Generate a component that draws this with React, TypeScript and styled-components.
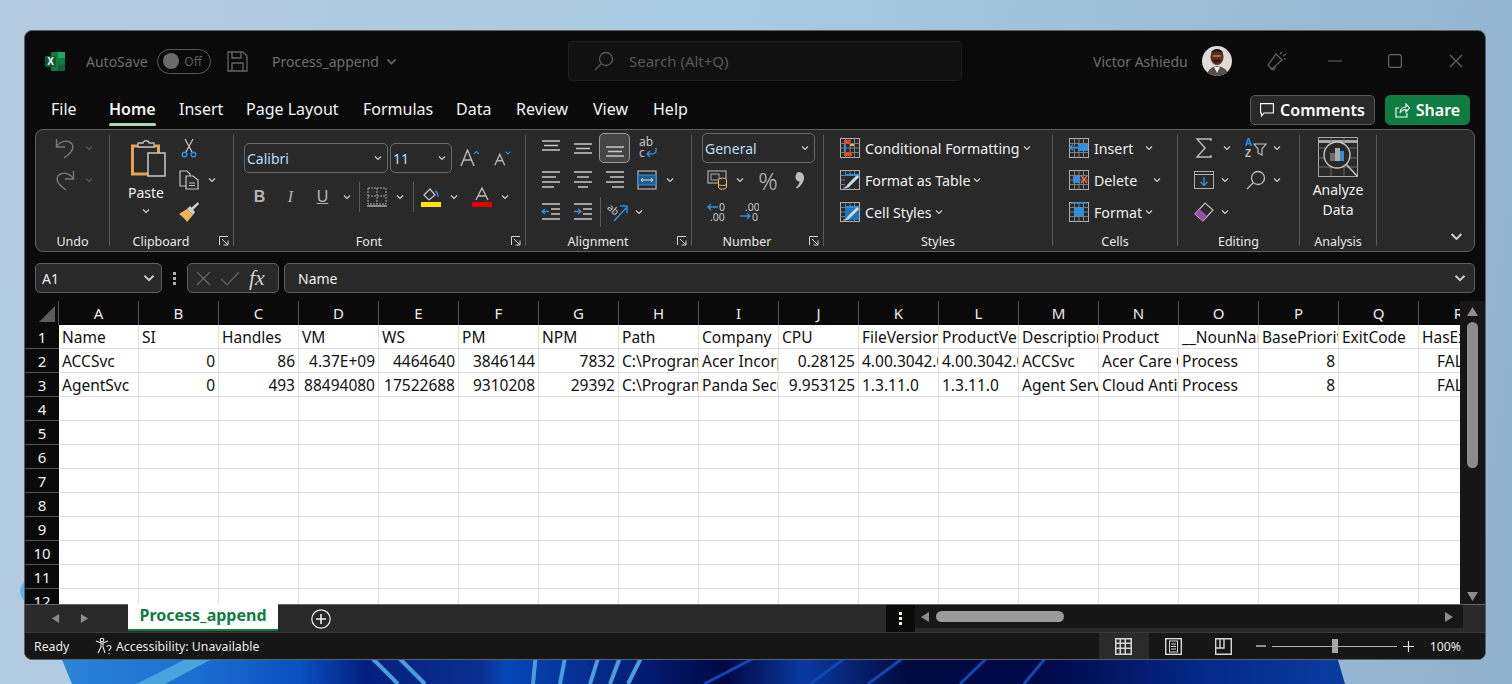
import React from 'react'
import styled, { createGlobalStyle } from 'styled-components'

const Global = createGlobalStyle`
  html, body { margin: 0; padding: 0; width: 1512px; height: 684px; overflow: hidden; }
  body { font-family: "Noto Sans", "Open Sans", sans-serif; color: #f2f2f2; }
  svg { display: block; flex: none; }
`

const Desktop = styled.div`
  position: relative;
  width: 1512px;
  height: 684px;
  box-sizing: border-box;
  padding: 30px 26px 24px 24px;
  background: linear-gradient(100deg, #b4cbe0 0%, #a8cae3 45%, #9dbdd6 75%, #8fb2cf 100%);
  overflow: hidden;
`

const Wallpaper = styled.svg`
  position: absolute;
  left: 0;
  top: 0;
`

const Win = styled.div`
  position: relative;
  height: 100%;
  box-sizing: border-box;
  display: flex;
  flex-direction: column;
  background: #0a0a0a;
  border: 1px solid #5c5f62;
  border-radius: 8px;
  overflow: hidden;
`

const TitleBar = styled.div`
  height: 60px;
  flex: none;
  display: flex;
  align-items: center;
  padding-left: 20px;
  color: #6e6e6e;
  font-size: 14px;
`

const AutoSaveLabel = styled.span`
  margin-left: 20px;
  width: 71px;
`

const Toggle = styled.div`
  width: 54px;
  height: 25px;
  box-sizing: border-box;
  border: 1px solid #5a5a5a;
  border-radius: 13px;
  display: flex;
  align-items: center;
  padding: 0 8px 0 5px;
  justify-content: space-between;
  font-size: 12px;
  color: #5e5e5e;
`

const ToggleKnob = styled.span`
  width: 16px;
  height: 16px;
  border-radius: 50%;
  background: #6a6a6a;
`

const SaveSlot = styled.div`
  margin: 0 24px 0 16px;
`

const DocName = styled.div`
  width: 114px;
  font-size: 14px;
`

const SearchBox = styled.div`
  margin-left: 171px;
  width: 394px;
  height: 40px;
  box-sizing: border-box;
  background: #111111;
  border: 1px solid #1e1e1e;
  border-radius: 4px;
  display: flex;
  align-items: center;
  gap: 15px;
  padding-left: 25px;
  font-size: 15px;
  color: #585858;
`

const UserName = styled.div`
  margin-left: 131px;
  width: 109px;
  font-size: 14px;
  white-space: nowrap;
`

const WinButtons = styled.div`
  display: flex;
  align-items: center;
  margin-left: 35px;
`

const WinSlot = styled.div<{ $w: number }>`
  width: ${p => p.$w}px;
  flex: none;
`

const TabRow = styled.div`
  height: 34px;
  flex: none;
  display: flex;
  align-items: center;
  padding-left: 26px;
`

const Tab = styled.div<{ $w: number; $on?: boolean }>`
  position: relative;
  width: ${p => p.$w}px;
  box-sizing: border-box;
  padding-top: 3px;
  font-size: 16px;
  line-height: 31px;
  font-weight: ${p => (p.$on ? 600 : 400)};
  color: #f4f4f4;
  white-space: nowrap;
  ${p => p.$on && `&::after { content: ""; position: absolute; left: 0; width: 47px; bottom: -1px; height: 3px; background: #a8d8b9; border-radius: 2px; }`}
`

const TabActions = styled.div`
  margin-left: auto;
  margin-right: 15px;
  margin-top: 4px;
  display: flex;
  gap: 10px;
`

const ActionBtn = styled.div<{ $w: number; $green?: boolean }>`
  width: ${p => p.$w}px;
  height: 30px;
  box-sizing: border-box;
  border-radius: 5px;
  display: flex;
  align-items: center;
  justify-content: center;
  gap: 6px;
  font-size: 16px;
  font-weight: 600;
  color: #fff;
  background: ${p => (p.$green ? '#107c41' : '#292929')};
  border: 1px solid ${p => (p.$green ? '#107c41' : '#5a5a5a')};
`

const Ribbon = styled.div`
  margin: 4px 10px 0;
  height: 123px;
  flex: none;
  box-sizing: border-box;
  background: #292929;
  border: 1px solid #5f5f5f;
  border-radius: 8px;
  display: flex;
  padding: 5px 0 5px;
  position: relative;
`

const Group = styled.div<{ $w: number; $end?: boolean }>`
  position: relative;
  width: ${p => p.$w}px;
  flex: none;
  box-sizing: border-box;
  display: flex;
  flex-direction: column;
  border-right: ${p => (p.$end ? 'none' : '1px solid #5a5a5a')};
`

const GroupBody = styled.div<{ $pt?: number; $pl?: number; $row?: boolean }>`
  flex: 1;
  margin-top: -3px;
  padding: ${p => p.$pt ?? 0}px 0 0 ${p => p.$pl ?? 0}px;
  display: flex;
  flex-direction: ${p => (p.$row ? 'row' : 'column')};
  min-height: 0;
`

const Caption = styled.div<{ $launch?: boolean }>`
  height: 16px;
  margin-bottom: -4px;
  flex: none;
  line-height: 16px;
  text-align: center;
  font-size: 12.5px;
  color: #e8e8e8;
  padding-right: ${p => (p.$launch ? 21 : 0)}px;
`

const Launcher = styled.div`
  position: absolute;
  right: 4px;
  bottom: 0;
`

const Row = styled.div<{ $h?: number }>`
  height: ${p => p.$h ?? 32}px;
  display: flex;
  align-items: center;
  flex: none;
`

const Stack = styled.div<{ $ml?: number }>`
  margin-left: ${p => p.$ml ?? 0}px;
  display: flex;
  flex-direction: column;
  flex: none;
`

const Slot = styled.div<{ $w: number; $h?: number; $ml?: number; $sel?: boolean }>`
  width: ${p => p.$w}px;
  height: ${p => p.$h ?? 30}px;
  margin-left: ${p => p.$ml ?? 0}px;
  box-sizing: border-box;
  display: flex;
  align-items: center;
  justify-content: center;
  flex: none;
  ${p => p.$sel && 'background: #454545; border: 1px solid #9a9a9a; border-radius: 5px;'}
`

const VSep = styled.div`
  width: 1px;
  height: 30px;
  background: #5a5a5a;
  flex: none;
`

const Select = styled.div<{ $w: number; $ml?: number }>`
  width: ${p => p.$w}px;
  margin-left: ${p => p.$ml ?? 0}px;
  height: 30px;
  box-sizing: border-box;
  border: 1px solid #6a6a6a;
  border-radius: 5px;
  display: flex;
  align-items: center;
  justify-content: space-between;
  padding: 0 5px 0 2px;
  font-size: 14px;
  color: #b8ddf6;
  flex: none;
`

const StyleLabel = styled.span<{ $w?: number }>`
  font-size: 14.2px;
  color: #f0f0f0;
  white-space: nowrap;
  margin-left: 5px;
  ${p => p.$w && `width: ${p.$w}px;`}
`

const ColumnCenter = styled.div<{ $w: number; $ml?: number; $mt?: number }>`
  width: ${p => p.$w}px;
  margin-left: ${p => p.$ml ?? 0}px;
  margin-top: ${p => p.$mt ?? 0}px;
  display: flex;
  flex-direction: column;
  align-items: center;
  flex: none;
`

const BigLabel = styled.div<{ $mt?: number; $shift?: number }>`
  font-size: 14px;
  line-height: 20px;
  margin-top: ${p => p.$mt ?? 0}px;
  margin-left: ${p => p.$shift ?? 0}px;
  color: #f0f0f0;
`

const Collapse = styled.div`
  position: absolute;
  right: 11px;
  bottom: 8px;
`

const FormulaRow = styled.div`
  margin: 11px 10px 0;
  height: 30px;
  flex: none;
  display: flex;
  align-items: stretch;
`

const FormulaBox = styled.div<{ $w?: number; $grow?: boolean }>`
  box-sizing: border-box;
  background: #292929;
  border: 1px solid #5f5f5f;
  border-radius: 5px;
  display: flex;
  align-items: center;
  font-size: 14px;
  ${p => p.$w && `width: ${p.$w}px; flex: none;`}
  ${p => p.$grow && 'flex: 1;'}
`

const NameBox = styled(FormulaBox)`
  justify-content: space-between;
  padding: 0 6px;
  color: #eee;
`

const Grip = styled.div`
  width: 25px;
  flex: none;
  display: flex;
  align-items: center;
  justify-content: center;
`

const FxBox = styled(FormulaBox)`
  margin-right: 5px;
  padding-left: 8px;
  gap: 9px;
  color: #bdbdbd;
`

const FxLabel = styled.span`
  font-family: "Liberation Serif", serif;
  font-style: italic;
  font-size: 22px;
  color: #d0d0d0;
`

const InputBox = styled(FormulaBox)`
  padding: 0 8px 0 13px;
  justify-content: space-between;
  color: #eee;
`

const Middle = styled.div`
  margin-top: 8px;
  flex: 1;
  min-height: 0;
  display: flex;
`

const Sheet = styled.div`
  flex: 1;
  min-width: 0;
  overflow: hidden;
  display: grid;
  grid-template-columns: 34px repeat(18, 80px);
  grid-auto-rows: 24px;
  font-size: 15.5px;
`

const Corner = styled.div`
  background: #0a0a0a;
  display: flex;
  justify-content: flex-end;
  align-items: flex-end;
  padding: 0 3px 3px 0;
  border-right: 1px solid #555;
  box-sizing: border-box;
`

const ColHead = styled.div`
  background: #0a0a0a;
  color: #ececec;
  text-align: center;
  line-height: 24px;
  border-right: 1px solid #555;
  font-size: 15px;
  box-sizing: border-box;
`

const RowHead = styled.div`
  background: #0a0a0a;
  color: #f2f2f2;
  text-align: center;
  line-height: 24px;
  border-bottom: 1px solid #555;
  font-size: 15px;
  box-sizing: border-box;
`

const Cell = styled.div<{ $a?: 'right' | 'center' }>`
  background: #fff;
  color: #111;
  box-sizing: border-box;
  border-right: 1px solid #e0e0e0;
  border-bottom: 1px solid #e0e0e0;
  line-height: 24px;
  padding: 0 3px;
  overflow: hidden;
  white-space: nowrap;
  text-align: ${p => p.$a ?? 'left'};
`

const VScroll = styled.div`
  width: 25px;
  flex: none;
  background: #161616;
  display: flex;
  flex-direction: column;
  align-items: center;
  padding: 5px 0 2px;
  box-sizing: border-box;
  justify-content: space-between;
`

const VThumb = styled.div`
  width: 11px;
  height: 146px;
  border-radius: 6px;
  background: #8c8c8c;
  margin-top: 5px;
  margin-bottom: auto;
`

const SheetBar = styled.div`
  height: 29px;
  flex: none;
  box-sizing: border-box;
  background: #292929;
  border-top: 1px solid #666;
  border-bottom: 1px solid #3a3a3a;
  display: flex;
  align-items: stretch;
`

const NavArrows = styled.div`
  width: 103px;
  flex: none;
  display: flex;
  align-items: center;
  padding-left: 26px;
  gap: 20px;
  box-sizing: border-box;
`

const SheetTab = styled.div`
  width: 150px;
  flex: none;
  margin-top: -1px;
  height: 27px;
  box-sizing: border-box;
  background: #fff;
  border-bottom: 2px solid #107c41;
  color: #107c41;
  font-weight: 700;
  font-size: 16px;
  text-align: center;
  line-height: 23px;
`

const AddSlot = styled.div`
  margin-left: 33px;
  width: 20px;
  display: flex;
  align-items: center;
`

const Dots = styled.div`
  margin-left: auto;
  width: 29px;
  flex: none;
  background: #0a0a0a;
  display: flex;
  align-items: center;
  justify-content: center;
`

const HScroll = styled.div`
  width: 548px;
  flex: none;
  background: #161616;
  display: flex;
  align-items: center;
  padding: 0 9px 0 5px;
  box-sizing: border-box;
  margin-bottom: 4px;
  margin-right: 22px;
`

const HThumb = styled.div`
  width: 128px;
  height: 11px;
  border-radius: 6px;
  background: #9a9a9a;
  margin: 0 auto 0 6px;
`

const StatusBar = styled.div`
  height: 26px;
  flex: none;
  background: #161616;
  display: flex;
  align-items: center;
  padding-left: 9px;
  font-size: 12.3px;
  color: #eaeaea;
`

const ReadyText = styled.span`
  width: 61px;
`

const A11y = styled.div`
  display: flex;
  align-items: center;
  gap: 3px;
`

const ViewBtn = styled.div<{ $on?: boolean }>`
  width: 50px;
  height: 26px;
  display: flex;
  align-items: center;
  justify-content: center;
  background: ${p => (p.$on ? '#2b2b2b' : 'transparent')};
`

const ViewGroup = styled.div`
  margin-left: auto;
  display: flex;
`

const ZoomWrap = styled.div`
  display: flex;
  align-items: center;
  margin-left: 7px;
  margin-right: 24px;
`

const Slider = styled.div`
  position: relative;
  width: 125px;
  height: 1px;
  background: #b0b0b0;
  margin: 0 6px;
`

const SliderThumb = styled.div`
  position: absolute;
  left: 60px;
  top: -7px;
  width: 6px;
  height: 14px;
  background: #a8a8a8;
`

const ZoomText = styled.span`
  margin-left: 16px;
  font-size: 12.3px;
`

const G = '#b5b5b5'
const B = '#2e8fdc'

const Chev = ({ s = 8, c = '#d0d0d0' }: { s?: number; c?: string }) => (
  <svg width={s} height={s} viewBox="0 0 8 8" fill="none" stroke={c} strokeWidth="1.2"><path d="M1 2.5 4 5.5 7 2.5" /></svg>
)

const Tri = ({ dir, c = '#8c8c8c', s = 10 }: { dir: 'u' | 'd' | 'l' | 'r'; c?: string; s?: number }) => {
  const d = { u: 'M5 1 10 9H0Z', d: 'M0 1H10L5 9Z', l: 'M9 0V10L1 5Z', r: 'M1 0V10L9 5Z' }[dir]
  return <svg width={s} height={s} viewBox="0 0 10 10" fill={c}><path d={d} /></svg>
}

const ExcelLogo = () => (
  <svg width="21" height="21" viewBox="0 0 21 21">
    <rect x="6" y="1" width="14" height="19" rx="1" fill="#107c41" />
    <rect x="13" y="1" width="7" height="6" fill="#21a366" />
    <rect x="13" y="7" width="7" height="6.5" fill="#107c41" />
    <rect x="13" y="13.5" width="7" height="6.5" fill="#185c37" />
    <rect x="0" y="5" width="11" height="11" rx="1" fill="#0b5c30" />
    <text x="5.5" y="14" textAnchor="middle" fontSize="10" fontWeight="700" fontFamily="Liberation Sans" fill="#fff">X</text>
  </svg>
)

const SaveIcon = () => (
  <svg width="21" height="21" viewBox="0 0 21 21" fill="none" stroke="#666" strokeWidth="1.3">
    <path d="M1 1H16L20 5V20H1Z" /><path d="M5 1V7H14V1M5 20V12H16V20" />
  </svg>
)

const Avatar = () => (
  <svg width="30" height="30" viewBox="0 0 30 30">
    <clipPath id="av"><circle cx="15" cy="15" r="15" /></clipPath>
    <g clipPath="url(#av)">
      <rect width="30" height="30" fill="#dedbd6" />
      <path d="M5 30C6 22 11 21 15 20C20 21 25 22 27 30Z" fill="#55504e" />
      <path d="M12 21 15 27 18 21Z" fill="#efefef" />
      <ellipse cx="15" cy="11" rx="6.5" ry="8" fill="#5a2d1c" />
      <path d="M9 7C10 2 20 2 21 7 18 5 12 5 9 7Z" fill="#1b0f0b" />
      <rect x="11" y="9" width="8" height="2" fill="#9a6a4a" />
      <rect x="12" y="14" width="6" height="2" fill="#2b130c" />
    </g>
  </svg>
)

const Megaphone = () => (
  <svg width="20" height="20" viewBox="0 0 20 20" fill="none" stroke="#666" strokeWidth="1.2">
    <path d="M1 14 9 3 15 9 5 18Z" /><path d="M4 17C5 20 8 19 8 16" /><path d="M13 3 15 1M16 5 19 3M17 8H19" />
  </svg>
)

const Undo = () => (
  <svg width="20" height="21" viewBox="0 0 20 21" fill="none" stroke="#7a7a7a" strokeWidth="1.4">
    <path d="M1.5 1V9H10" /><path d="M1.5 9C5 3 13 1 17 6C20 11 15 16 9 20" />
  </svg>
)

const Redo = () => (
  <svg width="20" height="21" viewBox="0 0 20 21" fill="none" stroke="#7a7a7a" strokeWidth="1.4">
    <path d="M18.5 1V9H10" /><path d="M18.5 9C15 3 7 1 3 6C0 11 5 16 11 20" />
  </svg>
)

const PasteIcon = () => (
  <svg width="36" height="38" viewBox="0 0 36 38">
    <rect x="1.5" y="6" width="26" height="28" fill="none" stroke="#e8a24f" strokeWidth="3" />
    <path d="M7 7V3H12C12 0 18 0 18 3H23V7Z" fill="#292929" stroke="#bdbdbd" strokeWidth="1.3" />
    <rect x="17" y="13" width="17" height="23" fill="#292929" stroke="#c8c8c8" strokeWidth="1.5" />
  </svg>
)

const Scissors = () => (
  <svg width="16" height="20" viewBox="0 0 16 20" fill="none">
    <path d="M5 14 12 1M11 14 4 1" stroke="#c8c8c8" strokeWidth="1.2" />
    <circle cx="3.5" cy="16.5" r="2.3" stroke={B} strokeWidth="1.4" />
    <circle cx="12.5" cy="16.5" r="2.3" stroke={B} strokeWidth="1.4" />
  </svg>
)

const CopyIcon = () => (
  <svg width="20" height="20" viewBox="0 0 20 20" fill="none" stroke="#c4c4c4" strokeWidth="1.2">
    <path d="M1 1H8L11 4V16H1Z" /><path d="M7 6H14L19 10V19H7Z" fill="#292929" /><path d="M10 13H16M10 15.5H16" />
  </svg>
)

const BrushIcon = () => (
  <svg width="20" height="20" viewBox="0 0 20 20">
    <path d="M12 6 19 0 20 2 14 8Z" fill="#d0d0d0" />
    <path d="M0 12 8 7 14 13 8 20C6 17 3 14 0 12Z" fill="#f2b35c" />
    <path d="M8 7 11 4 16 10 14 13Z" fill="#cfcfcf" />
  </svg>
)

const Launch = () => (
  <svg width="10" height="10" viewBox="0 0 10 10" fill="none" stroke="#d4d4d4" strokeWidth="1">
    <path d="M.5 9V.5H9M3 3 9 9M9 4.5V9H4.5" />
  </svg>
)

const GrowA = ({ up }: { up?: boolean }) => (
  <svg width={up ? 20 : 18} height="18" viewBox="0 0 20 18" fill="none" stroke={G} strokeWidth="1.5">
    <path d={up ? 'M1 17 7.5 1 14 17M3.5 11H11.5' : 'M2 17 7.5 5 13 17M4 12H11'} />
    <path d={up ? 'M14 5 16.5 2.5 19 5' : 'M14 2 16.5 4.5 19 2'} stroke={B} strokeWidth="1.2" />
  </svg>
)

const Letter = styled.span<{ $b?: boolean; $i?: boolean; $u?: boolean }>`
  font-family: ${p => (p.$i ? '"Liberation Serif", serif' : '"Liberation Sans", sans-serif')};
  font-size: 16px;
  color: #b5b5b5;
  font-weight: ${p => (p.$b ? 700 : 400)};
  font-style: ${p => (p.$i ? 'italic' : 'normal')};
  text-decoration: ${p => (p.$u ? 'underline' : 'none')};
`

const Borders = () => (
  <svg width="20" height="20" viewBox="0 0 20 20" fill="none" stroke="#a8a8a8" strokeWidth="1" strokeDasharray="2 1">
    <path d="M1 1H19V17H1ZM10 1V17M1 9H19" /><path d="M0 19H20" strokeDasharray="none" strokeWidth="1.5" />
  </svg>
)

const FillIcon = () => (
  <svg width="20" height="20" viewBox="0 0 20 20" fill="none">
    <path d="M3 8 9 2 14 8 8 13Z" stroke="#c8c8c8" strokeWidth="1.2" />
    <path d="M14 4C16 5 17 8 17 10" stroke={B} strokeWidth="1.5" />
    <rect y="15" width="20" height="5" fill="#ffe600" />
  </svg>
)

const FontColor = () => (
  <svg width="20" height="20" viewBox="0 0 20 20" fill="none">
    <path d="M4 13 10 1 16 13M6 9H14" stroke="#c0c0c0" strokeWidth="1.3" />
    <rect y="15" width="20" height="5" fill="#e60000" />
  </svg>
)

const lines = (ys: [number, number, number][], c = '#c8c8c8') =>
  ys.map(([y, a, b], i) => <path key={i} d={`M${a} ${y}H${b}`} stroke={c} strokeWidth="1.4" />)

const Lines = ({ spec }: { spec: [number, number, number][] }) => (
  <svg width="20" height="20" viewBox="0 0 20 20" fill="none">{lines(spec)}</svg>
)

const AL_TOP: [number, number, number][] = [[3, 1, 19], [7.5, 3, 17], [12, 1, 19]]
const AL_MID: [number, number, number][] = [[6, 1, 19], [10.5, 3, 17], [15, 1, 19]]
const AL_BOT: [number, number, number][] = [[9, 1, 19], [13.5, 3, 17], [18, 1, 19]]
const AL_L: [number, number, number][] = [[2, 1, 19], [7, 1, 15], [12, 1, 19], [17, 1, 13]]
const AL_C: [number, number, number][] = [[2, 1, 19], [7, 4, 16], [12, 1, 19], [17, 5, 15]]
const AL_R: [number, number, number][] = [[2, 1, 19], [7, 5, 19], [12, 1, 19], [17, 7, 19]]

const WrapIcon = () => (
  <svg width="20" height="24" viewBox="0 0 20 24" fill="none">
    <text x="1" y="10" fontSize="12" fontFamily="Noto Sans" fill="#c8c8c8">ab</text>
    <text x="1" y="21" fontSize="12" fontFamily="Noto Sans" fill="#c8c8c8">c</text>
    <path d="M18 12V15C18 18 15 18 9 18M12 15 9 18 12 21" stroke={B} strokeWidth="1.4" />
  </svg>
)

const MergeIcon = () => (
  <svg width="20" height="20" viewBox="0 0 20 20" fill="none">
    <rect x="1" y="1" width="18" height="18" stroke="#b5b5b5" strokeWidth="1.2" />
    <rect x="1" y="5" width="18" height="10" fill="#1f5d8d" stroke={B} />
    <path d="M4 10H16M6 8 4 10 6 12M14 8 16 10 14 12" stroke="#cfe6f7" strokeWidth="1" />
  </svg>
)

const Indent = ({ dir }: { dir: 'l' | 'r' }) => (
  <svg width="20" height="20" viewBox="0 0 20 20" fill="none">
    {lines([[2, 1, 19], [7, 10, 19], [12, 10, 19], [17, 1, 19]])}
    <path d={dir === 'l' ? 'M8 9.5H1M4 7 1 9.5 4 12' : 'M1 9.5H8M5 7 8 9.5 5 12'} stroke={B} strokeWidth="1.4" />
  </svg>
)

const Orient = () => (
  <svg width="22" height="20" viewBox="0 0 22 20" fill="none">
    <text x="0" y="11" fontSize="10" fontFamily="Noto Sans" fill="#c8c8c8" transform="rotate(40 6 8)">ab</text>
    <path d="M7 19 20 5M13 4H20V11" stroke={B} strokeWidth="1.4" />
  </svg>
)

const Accounting = () => (
  <svg width="21" height="20" viewBox="0 0 21 20" fill="none">
    <rect x="1" y="1" width="18" height="12" stroke="#aaa" strokeWidth="1.2" />
    <rect x="4" y="4" width="8" height="6" stroke="#aaa" />
    <ellipse cx="15.5" cy="10" rx="4" ry="2" fill="#292929" stroke="#f0b860" />
    <path d="M11.5 10V17C11.5 20 19.5 20 19.5 17V10M11.5 14C11.5 16 19.5 16 19.5 14" stroke="#f0b860" fill="#292929" />
  </svg>
)

const Percent = styled.span`
  font-size: 24px;
  color: #bcbcbc;
  font-weight: 300;
`

const CommaIcon = () => (
  <svg width="10" height="18" viewBox="0 0 10 18" fill="#bcbcbc">
    <path d="M4 1C8 1 9.5 5 9 8 8 12 5.500 15.500 2 17.500L1 16.500C3 14.500 4.500 12.500 4.500 10.500 2 10.500 .5 8.500 .5 6 .5 3 2 1 4 1Z" />
  </svg>
)

const Decimal = ({ inc }: { inc?: boolean }) => (
  <svg width="20" height="20" viewBox="0 0 20 20" fill="none">
    <text x={inc ? 6 : 12} y="9" fontSize="10.5" fontFamily="Noto Sans" fill="#c8c8c8">{inc ? '.00' : '0'}</text>
    <text x={inc ? 13 : 3} y="19" fontSize="10.5" fontFamily="Noto Sans" fill="#c8c8c8">{inc ? '0' : '.00'}</text>
    <path d={inc ? 'M1 14H11M8 11 11 14 8 17' : 'M11 5H1M4 2 1 5 4 8'} stroke={B} strokeWidth="1.4" />
  </svg>
)

const TableIcon = ({ kind }: { kind: 'cf' | 'ft' | 'cs' | 'ins' | 'del' | 'fmt' }) => (
  <svg width="20" height="20" viewBox="0 0 20 20" fill="none">
    <rect x=".5" y=".5" width="19" height="19" stroke="#b0b0b0" />
    <path d="M.5 5.5H19.5M.5 10H19.5M.5 14.5H19.5M5.5 .5V19.5M10 .5V19.5M14.5 .5V19.5" stroke="#7d7d7d" />
    {kind === 'cf' && <><rect x="4" y="2" width="6" height="4" fill="#e04b1a" /><rect x="4" y="14" width="8" height="4" fill="#e04b1a" /><path d="M5 6V14" stroke={B} strokeWidth="2" /><rect x="10" y="6" width="4" height="2" fill="#f2b35c" /></>}
    {(kind === 'ft' || kind === 'cs') && <><rect x="5" y="5" width="14" height="13" fill={kind === 'cs' ? '#1a76c4' : '#292929'} /><path d="M5 5H19" stroke={B} strokeWidth="2" /><path d="M3 18C6 18 7 15 8 14L17 5 19 7 10 16C9 17 7 19 3 18Z" fill="#d7d7d7" stroke="#6aaee0" strokeWidth=".6" /></>}
    {kind === 'ins' && <><rect x="9" y="6" width="10" height="7" fill={B} /><path d="M9 9.5H1M4 6.5 1 9.5 4 12.5" stroke={B} strokeWidth="1.4" /></>}
    {kind === 'del' && <><rect x="4" y="6" width="7" height="7" fill={B} /><path d="M12 6 18 13M18 6 12 13" stroke="#e2693a" strokeWidth="1.5" /></>}
    {kind === 'fmt' && <><rect x="5" y="5" width="10" height="9" fill={B} /><path d="M2 1H18" stroke={B} strokeWidth="1.6" /></>}
  </svg>
)

const Sigma = () => (
  <svg width="18" height="20" viewBox="0 0 18 20" fill="none" stroke="#bdbdbd" strokeWidth="1.4"><path d="M16 3V1H2L10 10 2 19H16V17" /></svg>
)

const SortIcon = () => (
  <svg width="22" height="22" viewBox="0 0 22 22" fill="none">
    <text x="0" y="9" fontSize="10" fontWeight="700" fontFamily="Liberation Sans" fill={B}>A</text>
    <text x="0" y="20" fontSize="10" fontWeight="700" fontFamily="Liberation Sans" fill="#c0c0c0">Z</text>
    <path d="M9 7H21L17 12V18L13 16V12Z" stroke="#c0c0c0" strokeWidth="1.2" />
  </svg>
)

const FillDown = () => (
  <svg width="20" height="18" viewBox="0 0 20 18" fill="none">
    <rect x=".5" y=".5" width="19" height="17" stroke="#b0b0b0" />
    <path d="M.5 3.5H19.5" stroke="#b0b0b0" />
    <path d="M10 6V14M6.5 11 10 14.5 13.5 11" stroke={B} strokeWidth="1.4" />
  </svg>
)

const FindIcon = ({ c = '#bdbdbd' }: { c?: string }) => (
  <svg width="20" height="20" viewBox="0 0 20 20" fill="none" stroke={c} strokeWidth="1.3">
    <circle cx="12" cy="8" r="6.5" /><path d="M7 13 1 19" />
  </svg>
)

const Eraser = () => (
  <svg width="20" height="20" viewBox="0 0 20 20" fill="none">
    <path d="M1 12 11 1 19 8 9 19Z" stroke="#c0c0c0" strokeWidth="1.2" />
    <path d="M1 12 5.5 7 13 14 9 19Z" fill="#a347b5" />
  </svg>
)

const AnalyzeIcon = () => (
  <svg width="40" height="40" viewBox="0 0 40 40" fill="none">
    <rect x=".5" y=".5" width="39" height="39" stroke="#a8a8a8" />
    <path d="M.5 4.5H39.5" stroke="#a8a8a8" strokeWidth="3" />
    <path d="M.5 11H39.5M.5 21H39.5M.5 30H39.5M13 1V39M26 1V39" stroke="#6b6b6b" />
    <circle cx="19" cy="18" r="13" fill="#292929" stroke="#c4c4c4" strokeWidth="1.4" />
    <rect x="12" y="16" width="5" height="8" fill="#6b6b6b" />
    <rect x="17" y="11" width="5" height="13" fill="#a8a8a8" />
    <rect x="22" y="14" width="4" height="10" fill={B} />
    <path d="M28 27 39 39" stroke="#c4c4c4" strokeWidth="1.6" />
  </svg>
)

const HEAD = 'ABCDEFGHIJKLMNOPQR'.split('')
type C = string | { t: string; a: 'right' | 'center' }
const R = (t: string | number): C => ({ t: String(t), a: 'right' })
const M = (t: string): C => ({ t, a: 'center' })
const ROWS: C[][] = [
  ['Name', 'SI', 'Handles', 'VM', 'WS', 'PM', 'NPM', 'Path', 'Company', 'CPU', 'FileVersion', 'ProductVersion', 'Description', 'Product', '__NounName', 'BasePriority', 'ExitCode', 'HasExited'],
  ['ACCSvc', R(0), R(86), R('4.37E+09'), R(4464640), R(3846144), R(7832), 'C:\\Program Files', 'Acer Incorporated', R(0.28125), '4.00.3042.0', '4.00.3042.0', 'ACCSvc', 'Acer Care Center', 'Process', R(8), '', M('FALSE')],
  ['AgentSvc', R(0), R(493), R(88494080), R(17522688), R(9310208), R(29392), 'C:\\Program Files', 'Panda Security', R(9.953125), '1.3.11.0', '1.3.11.0', 'Agent Service', 'Cloud Antivirus', 'Process', R(8), '', M('FALSE')],
]

const cellOf = (c: C, k: string) =>
  typeof c === 'string' ? <Cell key={k}>{c}</Cell> : <Cell key={k} $a={c.a}>{c.t}</Cell>

export default function App() {
  return (
    <Desktop>
      <Global />
      <Wallpaper width="1512" height="684" viewBox="0 0 1512 684">
        <defs>
          <linearGradient id="bloom" gradientUnits="userSpaceOnUse" x1="55" x2="1345" y1="0" y2="0">
            <stop offset="0" stopColor="#2a86d8" />
            <stop offset=".11" stopColor="#1c6ed0" />
            <stop offset=".19" stopColor="#0a50c0" />
            <stop offset=".24" stopColor="#03207f" />
            <stop offset=".33" stopColor="#0a2f90" />
            <stop offset=".35" stopColor="#0648b8" />
            <stop offset=".46" stopColor="#031a70" />
            <stop offset=".52" stopColor="#010845" />
            <stop offset=".58" stopColor="#0a3aa0" />
            <stop offset=".66" stopColor="#010a40" />
            <stop offset=".77" stopColor="#010a4a" />
            <stop offset=".89" stopColor="#04298a" />
            <stop offset="1" stopColor="#0a3da0" />
          </linearGradient>
        </defs>
        <path d="M58 650H1335L1345 684H72Z" fill="url(#bloom)" />
        <path d="M20 592C20 586 24 580 30 578V604C24 602 21 598 20 592Z" fill="#5fb4e6" />
        <path d="M136 684 200 652H225L165 684Z" fill="#4aa3dc" />
        <path d="M366 652 398 684M393 652 425 684M536 652 533 684M566 652 560 684M600 652 590 684M622 652 610 684M644 652 628 684" stroke="#4a9edc" strokeWidth="4" fill="none" />
        <path d="M760 655 704 684M849 655 810 684M907 655 868 684M990 655 960 684M1048 655 1024 684" stroke="#0f49b5" strokeWidth="3" fill="none" />
      </Wallpaper>
      <Win>
        <TitleBar>
          <ExcelLogo />
          <AutoSaveLabel>AutoSave</AutoSaveLabel>
          <Toggle><ToggleKnob />Off</Toggle>
          <SaveSlot><SaveIcon /></SaveSlot>
          <DocName>Process_append</DocName>
          <Chev s={11} c="#6a6a6a" />
          <SearchBox>
            <FindIcon c="#5a5a5a" />
            Search (Alt+Q)
          </SearchBox>
          <UserName>Victor Ashiedu</UserName>
          <Avatar />
          <WinButtons>
            <WinSlot $w={61}><Megaphone /></WinSlot>
            <WinSlot $w={60}><svg width="14" height="14" viewBox="0 0 14 14" stroke="#666" strokeWidth="1.2"><path d="M0 7H14" /></svg></WinSlot>
            <WinSlot $w={61}><svg width="14" height="14" viewBox="0 0 14 14" fill="none" stroke="#666" strokeWidth="1.2"><rect x=".6" y=".6" width="12.8" height="12.8" rx="2" /></svg></WinSlot>
            <WinSlot $w={14}><svg width="14" height="14" viewBox="0 0 14 14" stroke="#666" strokeWidth="1.2"><path d="M1 1 13 13M13 1 1 13" /></svg></WinSlot>
          </WinButtons>
        </TitleBar>
        <TabRow>
          <Tab $w={58}>File</Tab>
          <Tab $w={70} $on>Home</Tab>
          <Tab $w={67}>Insert</Tab>
          <Tab $w={117}>Page Layout</Tab>
          <Tab $w={93}>Formulas</Tab>
          <Tab $w={60}>Data</Tab>
          <Tab $w={77}>Review</Tab>
          <Tab $w={60}>View</Tab>
          <Tab $w={40}>Help</Tab>
          <TabActions>
            <ActionBtn $w={125}>
              <svg width="14" height="14" viewBox="0 0 14 14" fill="none" stroke="#fff" strokeWidth="1.1"><path d="M.6.6H13.4V10H4L1.5 13V10H.6Z" /></svg>
              Comments
            </ActionBtn>
            <ActionBtn $w={85} $green>
              <svg width="15" height="15" viewBox="0 0 15 15" fill="none" stroke="#fff" strokeWidth="1.1"><path d="M4 5H1V14H12V10M5 10C5 6 8 4 11 4V1L14.5 5 11 9V6.5C8 6.5 6 8 5 10Z" /></svg>
              Share
            </ActionBtn>
          </TabActions>
        </TabRow>

        <Ribbon>
          <Group $w={74}>
            <GroupBody $pl={19}>
              <Row>
                <Undo />
                <Slot $w={28}><Chev c="#5a5a5a" /></Slot>
              </Row>
              <Row>
                <Redo />
                <Slot $w={28}><Chev c="#5a5a5a" /></Slot>
              </Row>
            </GroupBody>
            <Caption>Undo</Caption>
          </Group>

          <Group $w={124}>
            <GroupBody $row>
              <ColumnCenter $w={36} $ml={21} $mt={8}>
                <PasteIcon />
                <BigLabel $mt={5} $shift={-6}>Paste</BigLabel>
                <Slot $w={20} $h={16} $ml={-6}><Chev /></Slot>
              </ColumnCenter>
              <Stack $ml={12}>
                <Row><Slot $w={20}><Scissors /></Slot></Row>
                <Row><Slot $w={20}><CopyIcon /></Slot><Slot $w={26}><Chev /></Slot></Row>
                <Row><Slot $w={20}><BrushIcon /></Slot></Row>
              </Stack>
            </GroupBody>
            <Caption $launch>Clipboard</Caption>
            <Launcher><Launch /></Launcher>
          </Group>

          <Group $w={292}>
            <GroupBody $pt={11} $pl={10}>
              <Row $h={30}>
                <Select $w={144}>Calibri<Chev /></Select>
                <Select $w={62} $ml={2}>11<Chev /></Select>
                <Slot $w={30} $ml={3}><GrowA up /></Slot>
                <Slot $w={34}><GrowA /></Slot>
              </Row>
              <Row $h={48}>
                <Slot $w={31}><Letter $b>B</Letter></Slot>
                <Slot $w={31}><Letter $i>I</Letter></Slot>
                <Slot $w={33}><Letter $u>U</Letter></Slot>
                <Slot $w={15}><Chev /></Slot>
                <Slot $w={10}><VSep /></Slot>
                <Slot $w={25}><Borders /></Slot>
                <Slot $w={22}><Chev /></Slot>
                <Slot $w={4}><VSep /></Slot>
                <Slot $w={32}><FillIcon /></Slot>
                <Slot $w={14}><Chev /></Slot>
                <Slot $w={6} />
                <Slot $w={30}><FontColor /></Slot>
                <Slot $w={16}><Chev /></Slot>
              </Row>
            </GroupBody>
            <Caption $launch>Font</Caption>
            <Launcher><Launch /></Launcher>
          </Group>

          <Group $w={166}>
            <GroupBody $pl={9}>
              <Row>
                <Slot $w={32}><Lines spec={AL_TOP} /></Slot>
                <Slot $w={32}><Lines spec={AL_MID} /></Slot>
                <Slot $w={31} $sel><Lines spec={AL_BOT} /></Slot>
                <Slot $w={36}><WrapIcon /></Slot>
              </Row>
              <Row>
                <Slot $w={32}><Lines spec={AL_L} /></Slot>
                <Slot $w={32}><Lines spec={AL_C} /></Slot>
                <Slot $w={32}><Lines spec={AL_R} /></Slot>
                <Slot $w={32}><MergeIcon /></Slot>
                <Slot $w={14}><Chev /></Slot>
              </Row>
              <Row>
                <Slot $w={32}><Indent dir="l" /></Slot>
                <Slot $w={32}><Indent dir="r" /></Slot>
                <Slot $w={2}><VSep /></Slot>
                <Slot $w={34}><Orient /></Slot>
                <Slot $w={8}><Chev /></Slot>
              </Row>
            </GroupBody>
            <Caption $launch>Alignment</Caption>
            <Launcher><Launch /></Launcher>
          </Group>

          <Group $w={132}>
            <GroupBody $pl={10}>
              <Row><Select $w={113}>General<Chev /></Select></Row>
              <Row>
                <Slot $w={30}><Accounting /></Slot>
                <Slot $w={16}><Chev /></Slot>
                <Slot $w={40}><Percent>%</Percent></Slot>
                <Slot $w={24}><CommaIcon /></Slot>
              </Row>
              <Row>
                <Slot $w={30}><Decimal /></Slot>
                <Slot $w={34}><Decimal inc /></Slot>
              </Row>
            </GroupBody>
            <Caption $launch>Number</Caption>
            <Launcher><Launch /></Launcher>
          </Group>

          <Group $w={229}>
            <GroupBody $pl={16}>
              <Row><TableIcon kind="cf" /><StyleLabel>Conditional Formatting</StyleLabel><Slot $w={14}><Chev /></Slot></Row>
              <Row><TableIcon kind="ft" /><StyleLabel>Format as Table</StyleLabel><Slot $w={14}><Chev /></Slot></Row>
              <Row><TableIcon kind="cs" /><StyleLabel>Cell Styles</StyleLabel><Slot $w={14}><Chev /></Slot></Row>
            </GroupBody>
            <Caption>Styles</Caption>
          </Group>

          <Group $w={125}>
            <GroupBody $pl={16}>
              <Row><TableIcon kind="ins" /><StyleLabel $w={48}>Insert</StyleLabel><Slot $w={14}><Chev /></Slot></Row>
              <Row><TableIcon kind="del" /><StyleLabel $w={56}>Delete</StyleLabel><Slot $w={14}><Chev /></Slot></Row>
              <Row><TableIcon kind="fmt" /><StyleLabel $w={48}>Format</StyleLabel><Slot $w={14}><Chev /></Slot></Row>
            </GroupBody>
            <Caption>Cells</Caption>
          </Group>

          <Group $w={122}>
            <GroupBody $pl={16} $row>
              <Stack>
                <Row><Slot $w={20}><Sigma /></Slot><Slot $w={26}><Chev /></Slot></Row>
                <Row><Slot $w={20}><FillDown /></Slot><Slot $w={22}><Chev /></Slot></Row>
                <Row><Slot $w={20}><Eraser /></Slot><Slot $w={22}><Chev /></Slot></Row>
              </Stack>
              <Stack>
                <Row><Slot $w={32}><SortIcon /></Slot><Slot $w={10}><Chev /></Slot></Row>
                <Row><Slot $w={32}><FindIcon /></Slot><Slot $w={10}><Chev /></Slot></Row>
              </Stack>
            </GroupBody>
            <Caption>Editing</Caption>
          </Group>

          <Group $w={77}>
            <GroupBody $pt={5}>
              <ColumnCenter $w={76}>
                <AnalyzeIcon />
                <BigLabel $mt={3}>Analyze</BigLabel>
                <BigLabel>Data</BigLabel>
              </ColumnCenter>
            </GroupBody>
            <Caption>Analysis</Caption>
          </Group>
          <Collapse><Chev s={13} /></Collapse>
        </Ribbon>

        <FormulaRow>
          <NameBox $w={127}>A1<Chev s={12} /></NameBox>
          <Grip>
            <svg width="3" height="13" viewBox="0 0 3 13" fill="#b0b0b0"><rect width="3" height="3" /><rect y="5" width="3" height="3" /><rect y="10" width="3" height="3" /></svg>
          </Grip>
          <FxBox $w={92}>
            <svg width="15" height="15" viewBox="0 0 15 15" stroke="#666" strokeWidth="1.2"><path d="M1 1 14 14M14 1 1 14" /></svg>
            <svg width="20" height="15" viewBox="0 0 20 15" fill="none" stroke="#666" strokeWidth="1.2"><path d="M1 8 7 14 19 1" /></svg>
            <FxLabel>fx</FxLabel>
          </FxBox>
          <InputBox $grow>Name<Chev s={12} /></InputBox>
        </FormulaRow>

        <Middle>
          <Sheet>
            <Corner><svg width="16" height="16" viewBox="0 0 16 16" fill="#5c5c5c"><path d="M16 0V16H0Z" /></svg></Corner>
            {HEAD.map(h => <ColHead key={h}>{h}</ColHead>)}
            {Array.from({ length: 12 }).map((_, r) => (
              <React.Fragment key={r}>
                <RowHead>{r + 1}</RowHead>
                {HEAD.map((h, c) => cellOf(ROWS[r] ? ROWS[r][c] : '', `${h}${r}`))}
              </React.Fragment>
            ))}
          </Sheet>
          <VScroll>
            <Tri dir="u" s={11} />
            <VThumb />
            <Tri dir="d" s={11} />
          </VScroll>
        </Middle>

        <SheetBar>
          <NavArrows><Tri dir="l" s={9} c="#8a8a8a" /><Tri dir="r" s={9} c="#8a8a8a" /></NavArrows>
          <SheetTab>Process_append</SheetTab>
          <AddSlot>
            <svg width="20" height="20" viewBox="0 0 20 20" fill="none" stroke="#eee" strokeWidth="1.2"><circle cx="10" cy="10" r="9.2" /><path d="M5 10H15M10 5V15" strokeWidth="1.6" /></svg>
          </AddSlot>
          <Dots>
            <svg width="3" height="13" viewBox="0 0 3 13" fill="#f5f5e8"><rect width="3" height="3" /><rect y="5" width="3" height="3" /><rect y="10" width="3" height="3" /></svg>
          </Dots>
          <HScroll>
            <Tri dir="l" s={10} />
            <HThumb />
            <Tri dir="r" s={10} />
          </HScroll>
        </SheetBar>

        <StatusBar>
          <ReadyText>Ready</ReadyText>
          <A11y>
            <svg width="18" height="18" viewBox="0 0 18 18" fill="none" stroke="#e8e8e8" strokeWidth="1.1">
              <circle cx="7" cy="3" r="1.8" /><path d="M1 4 6 6H8L13 4M6 6V10L3 16M8 6V10L10 16" /><path d="M12 10C12 8 16 8 16 10 16 12 14 12 14 14M14 16V17" />
            </svg>
            Accessibility: Unavailable
          </A11y>
          <ViewGroup>
            <ViewBtn $on>
              <svg width="17" height="17" viewBox="0 0 17 17" fill="#d8d8d8"><path d="M0 0H17V17H0ZM1.5 1.5V4.5H4.5V1.5ZM6 1.5V4.5H9.5V1.5ZM11 1.5V4.5H15.5V1.5ZM1.5 6V9.5H4.5V6ZM6 6V9.5H9.5V6ZM11 6V9.5H15.5V6ZM1.5 11V15.5H4.5V11ZM6 11V15.5H9.5V11ZM11 11V15.5H15.5V11Z" fillRule="evenodd" /></svg>
            </ViewBtn>
            <ViewBtn>
              <svg width="17" height="17" viewBox="0 0 17 17" fill="none" stroke="#d8d8d8"><rect x=".7" y=".7" width="15.6" height="15.6" strokeWidth="1.4" /><rect x="4.5" y="3" width="8" height="11" /><path d="M6 6H11M6 8.5H11M6 11H11" /></svg>
            </ViewBtn>
            <ViewBtn>
              <svg width="17" height="17" viewBox="0 0 17 17" fill="none" stroke="#d8d8d8" strokeWidth="1.4"><path d="M.7.7H16.3V16.3H.7ZM.7 10H9V.7M5 .7V10" /></svg>
            </ViewBtn>
          </ViewGroup>
          <ZoomWrap>
            <svg width="10" height="10" viewBox="0 0 10 10" stroke="#e0e0e0" strokeWidth="1.2"><path d="M0 5H10" /></svg>
            <Slider><SliderThumb /></Slider>
            <svg width="11" height="11" viewBox="0 0 11 11" stroke="#e0e0e0" strokeWidth="1.2"><path d="M0 5.5H11M5.5 0V11" /></svg>
            <ZoomText>100%</ZoomText>
          </ZoomWrap>
        </StatusBar>
      </Win>
    </Desktop>
  )
}
